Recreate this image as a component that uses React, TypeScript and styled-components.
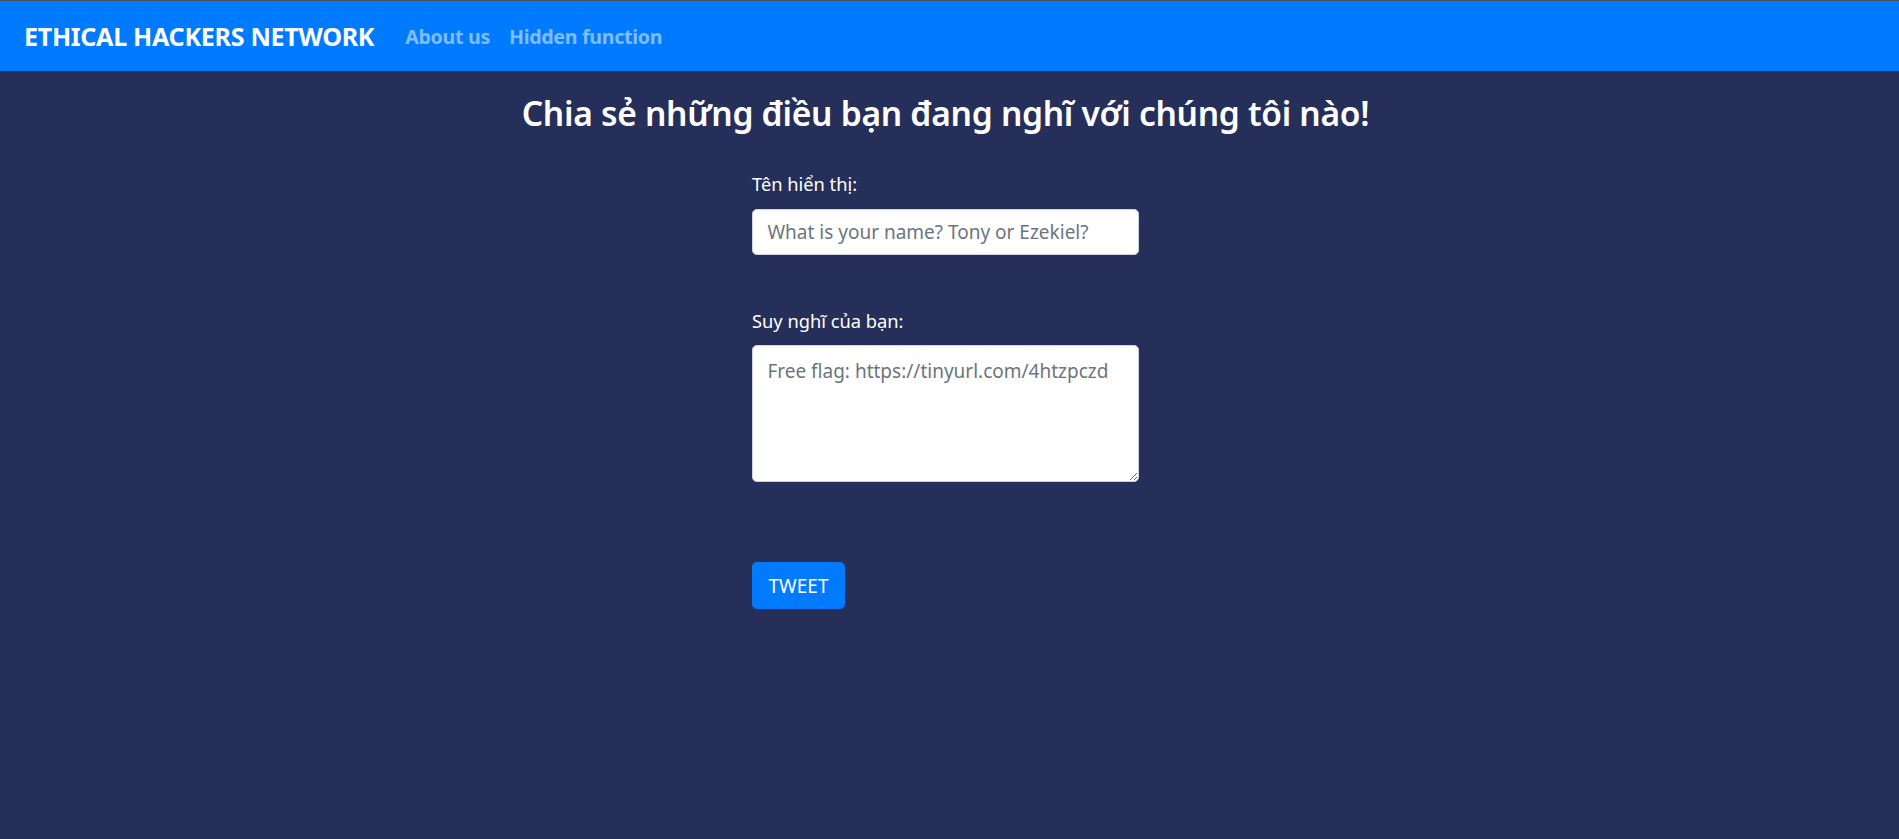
import * as React from 'react';
import styled, { createGlobalStyle } from 'styled-components';

const GLOBAL = createGlobalStyle`
  html, body {
    margin: 0;
    padding: 0;
    background-color: #252f5a;
    font-family: "Noto Sans", "Open Sans", sans-serif;
  }
  * {
    box-sizing: border-box;
  }
`;

const NAVBAR = styled.nav`
  display: flex;
  align-items: center;
  height: 71px;
  padding: 0 19px 0 24px;
  background-color: #007bff;
  border-top: 1px solid #4a4f5c;
`;

const BRAND = styled.a`
  color: #ffffff;
  font-size: 25.1px;
  font-weight: 700;
  margin-right: 31px;
  letter-spacing: -0.3px;
  text-decoration: none;
`;

const NAVLINK = styled.a`
  color: rgba(255, 255, 255, 0.5);
  font-size: 19.6px;
  font-weight: 700;
  margin-right: 19px;
  letter-spacing: -0.3px;
  text-decoration: none;
`;

const MAIN = styled.main`
  display: flex;
  flex-direction: column;
  align-items: center;
  padding-right: 8px;
`;

const HEADING = styled.h3`
  margin: 22px 0 0;
  color: #ffffff;
  font-size: 33.6px;
  font-weight: 600;
  line-height: 1.2;
  letter-spacing: -0.3px;
`;

const FORM = styled.form`
  display: flex;
  flex-direction: column;
  width: 387px;
  margin-top: 37px;
`;

const LABEL = styled.label<{ $top?: number }>`
  display: block;
  margin-top: ${(p) => p.$top ?? 0}px;
  margin-bottom: 9.6px;
  color: #ffffff;
  font-size: 18.3px;
  line-height: 28.8px;
`;

const FIELD = `
  display: block;
  width: 100%;
  padding: 6px 14.4px;
  border: 1.2px solid #ced4da;
  border-radius: 4.8px;
  background-color: #ffffff;
  color: #495057;
  font-family: "Noto Sans", "Open Sans", sans-serif;
  font-size: 19px;
  line-height: 1.5;
  outline: none;
  &::placeholder {
    color: #6c757d;
    opacity: 1;
  }
`;

const INPUT = styled.input`
  ${FIELD}
  height: 46px;
`;

const TEXTAREA = styled.textarea`
  ${FIELD}
  height: 137px;
  padding-top: 11px;
  resize: vertical;
`;

const BUTTON = styled.button`
  align-self: flex-start;
  width: 93px;
  height: 47px;
  margin-top: 80px;
  padding: 0;
  border: 1.2px solid #007bff;
  border-radius: 4.8px;
  background-color: #007bff;
  color: #ffffff;
  font-family: "Noto Sans", "Open Sans", sans-serif;
  font-size: 19px;
  cursor: pointer;
`;

const App: React.FunctionComponent = () => {
  return (
    <>
      <GLOBAL />
      <NAVBAR>
        <BRAND href="#">ETHICAL HACKERS NETWORK</BRAND>
        <NAVLINK href="#">About us</NAVLINK>
        <NAVLINK href="#">Hidden function</NAVLINK>
      </NAVBAR>
      <MAIN>
        <HEADING>Chia sẻ những điều bạn đang nghĩ với chúng tôi nào!</HEADING>
        <FORM onSubmit={(e) => e.preventDefault()}>
          <LABEL htmlFor="name">Tên hiển thị:</LABEL>
          <INPUT id="name" type="text" placeholder="What is your name? Tony or Ezekiel?" />
          <LABEL htmlFor="thought" $top={52}>Suy nghĩ của bạn:</LABEL>
          <TEXTAREA id="thought" placeholder="Free flag: https://tinyurl.com/4htzpczd" />
          <BUTTON type="submit">TWEET</BUTTON>
        </FORM>
      </MAIN>
    </>
  );
};

export default App;
